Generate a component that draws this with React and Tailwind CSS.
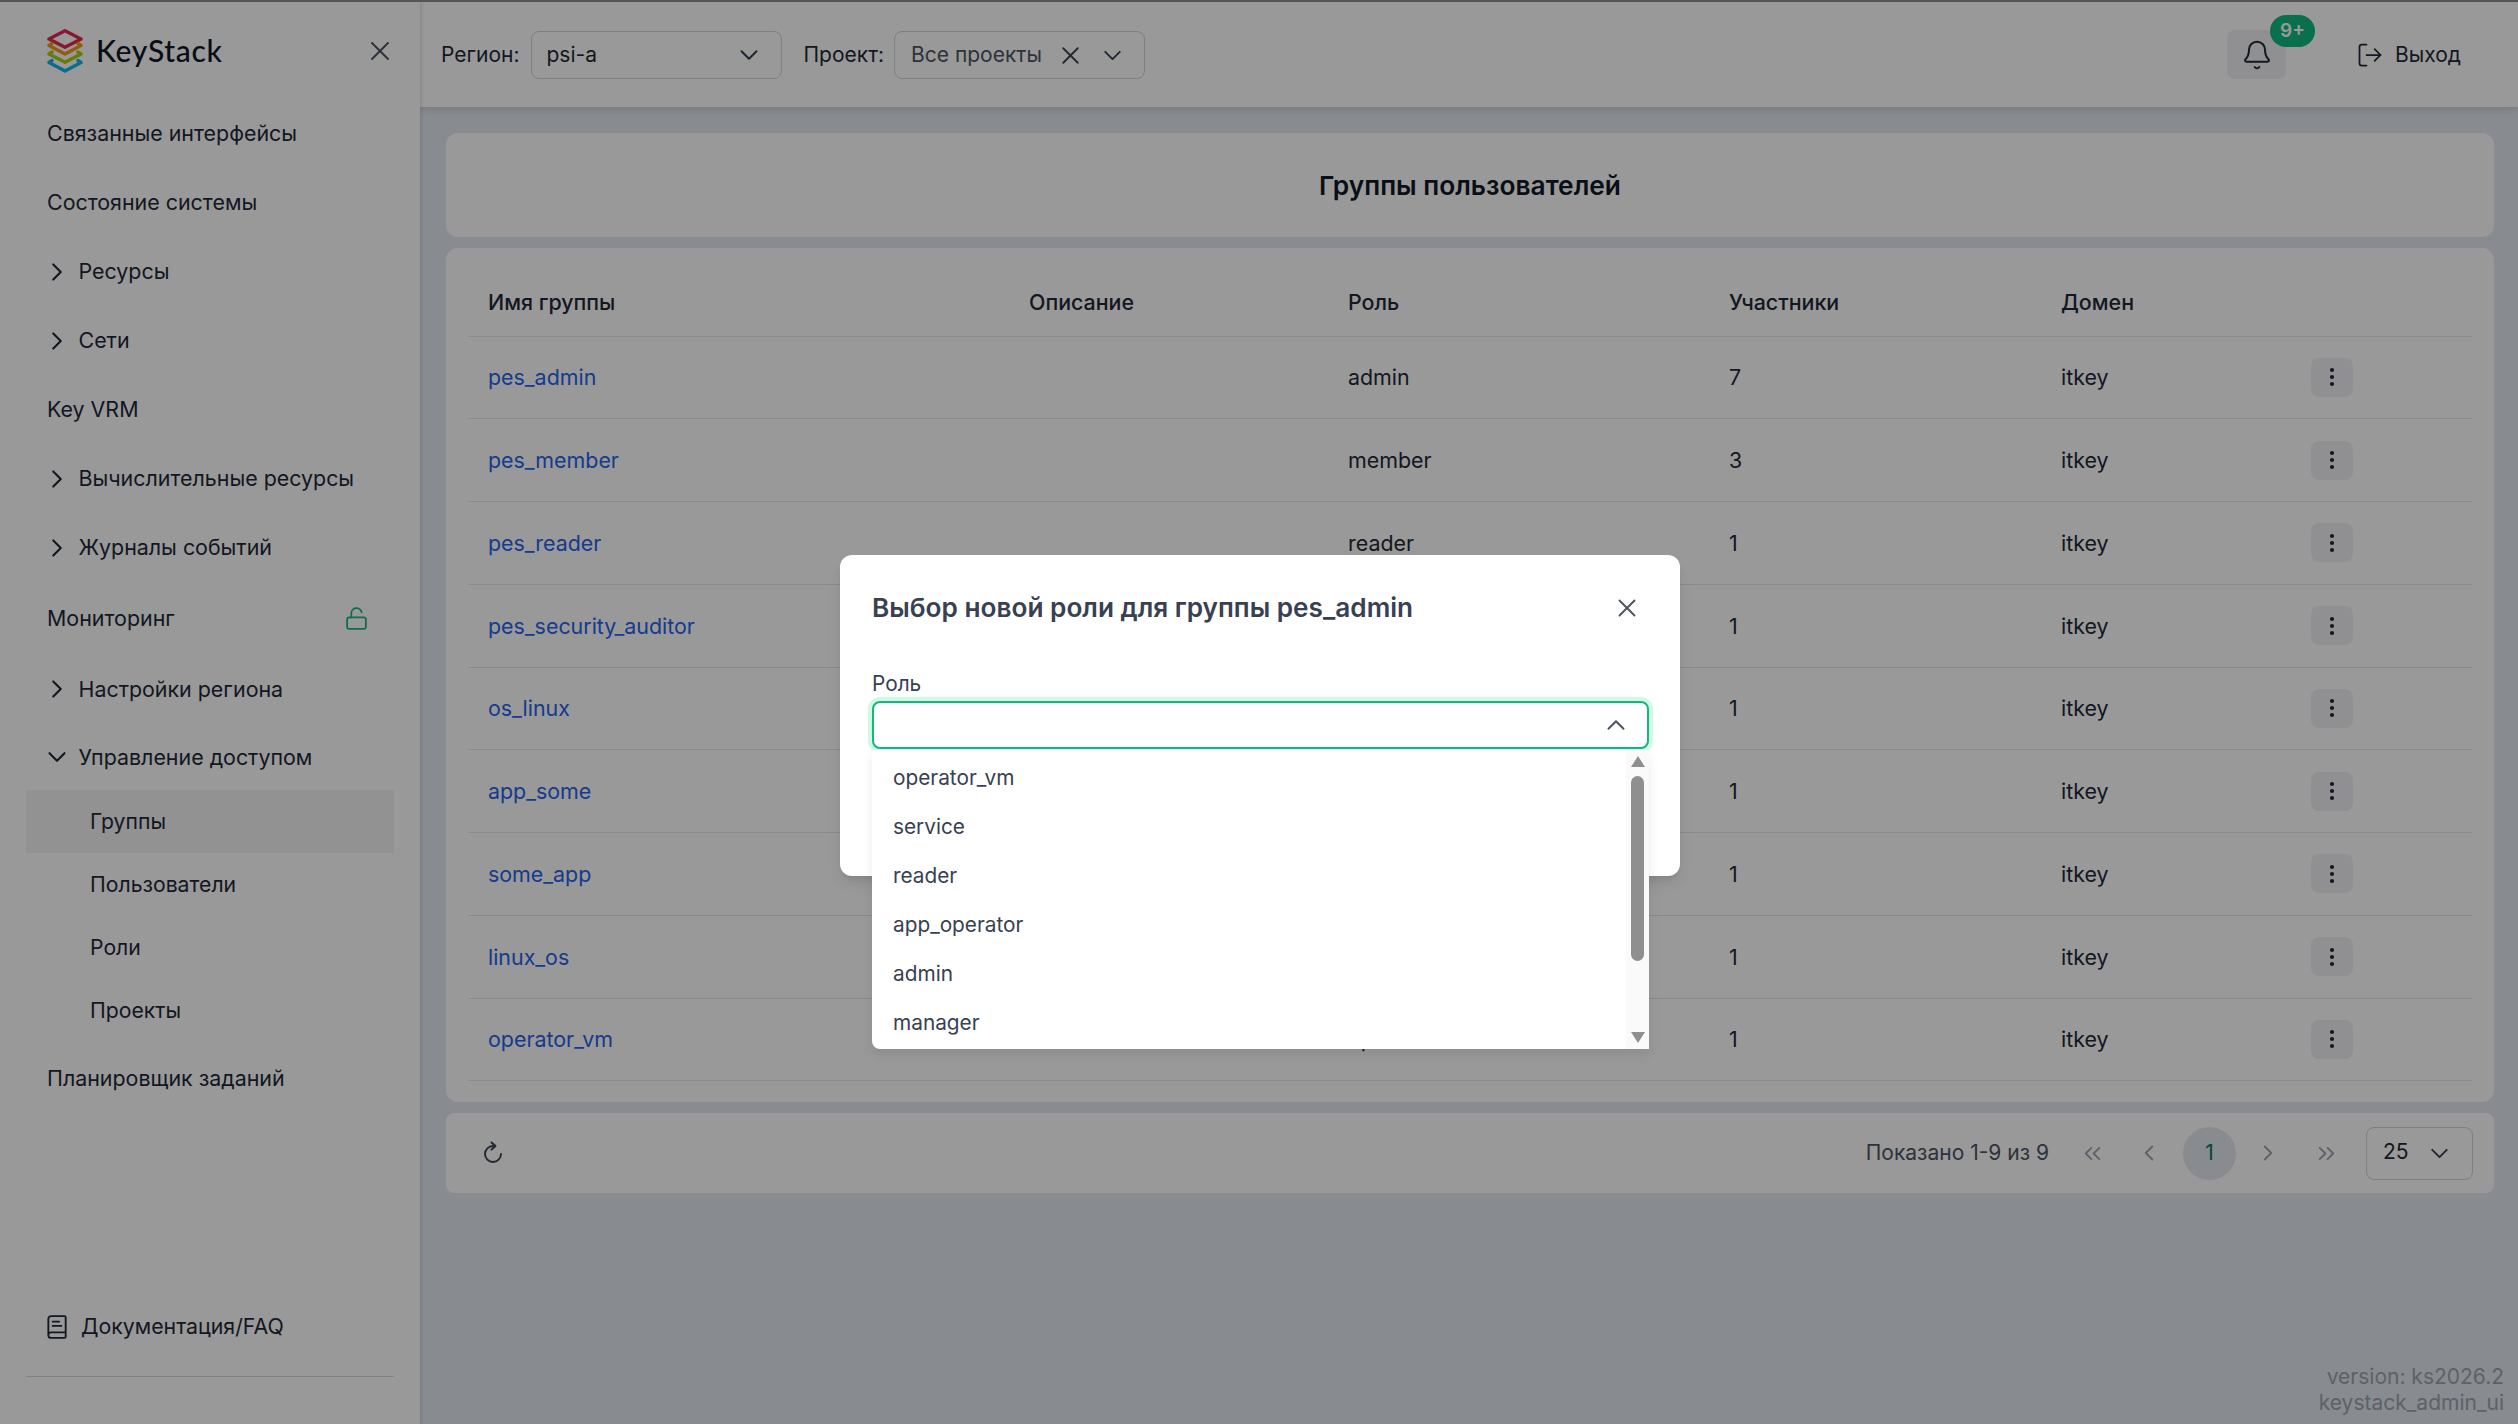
import React from "react";
import { ChevronRight, ChevronDown, ChevronUp, X, Bell, LogOut, LockOpen, BookText, EllipsisVertical, ChevronsLeft, ChevronsRight, ChevronLeft } from "lucide-react";

function Logo() {
  return (
    <svg width="36" height="44" viewBox="0 0 36 44" fill="none" strokeWidth="3.4" strokeLinejoin="round" strokeLinecap="round">
      <path d="M18 1.8 L34 10 L18 18.2 L2 10 Z" stroke="#e5284f" />
      <path d="M5 14.5 L2 16.5 L18 25 L34 16.5 L31 14.5" stroke="#f09a17" />
      <path d="M5 23 L2 25 L18 33.2 L34 25 L31 23" stroke="#a8cf12" />
      <path d="M5 31.5 L2 33.5 L18 42 L34 33.5 L31 31.5" stroke="#16b5e6" />
    </svg>
  );
}

function NavTop({ children, right, className = "h-[69px]" }) {
  return (
    <div className={"flex items-center justify-between pl-[47px] pr-[51px] text-[21.4px] text-[#1f2937] " + className}>
      <span>{children}</span>
      {right}
    </div>
  );
}

function NavGroup({ children, open, className = "h-[69px]" }) {
  return (
    <div className={"flex items-center pl-[42px] text-[21.4px] text-[#1f2937] " + className}>
      {open ? <ChevronDown size={30} strokeWidth={1.7} className="mr-[6.5px]" /> : <ChevronRight size={30} strokeWidth={1.7} className="mr-[6.5px]" />}
      <span>{children}</span>
    </div>
  );
}

function NavSub({ children, active }) {
  return (
    <div className={"h-[63px] ml-[26px] mr-[26px] flex items-center pl-[64px] text-[21.2px] text-[#1f2937] " + (active ? "bg-[#f3f4f6]" : "")}>
      {children}
    </div>
  );
}

const rows = [
  ["pes_admin", "admin", "7"],
  ["pes_member", "member", "3"],
  ["pes_reader", "reader", "1"],
  ["pes_security_auditor", "", "1"],
  ["os_linux", "", "1"],
  ["app_some", "", "1"],
  ["some_app", "", "1"],
  ["linux_os", "", "1"],
  ["operator_vm", "operator", "1"],
];

const gridCols = "grid grid-cols-[541px_319px_381px_332px_250px_1fr]";

function Sel({ className, children }) {
  return (
    <div className={"h-[48px] rounded-lg border border-[#d1d5db] flex items-center " + className}>{children}</div>
  );
}

export default function App() {
  return (
    <div className="relative w-[2518px] h-[1424px] overflow-hidden flex bg-[#e3e8f0] text-[#1f2937]" style={{ fontFamily: "Inter, 'Noto Sans', sans-serif" }}>
      <aside className="w-[420px] shrink-0 bg-white flex flex-col shadow-[1px_0_4px_rgba(0,0,0,0.15)] z-10">
        <div className="h-[99px] shrink-0 flex items-center pl-[47px] pr-[24px] pt-[2px]">
          <Logo />
          <span className="ml-[13px] text-[30px] font-medium tracking-[0.7px] text-[#101626]" style={{ fontFamily: "Lato, sans-serif" }}>KeyStack</span>
          <X size={32} strokeWidth={1.5} className="ml-auto text-[#4b5563]" />
        </div>
        <NavTop>Связанные интерфейсы</NavTop>
        <NavTop>Состояние системы</NavTop>
        <NavGroup>Ресурсы</NavGroup>
        <NavGroup>Сети</NavGroup>
        <NavTop>Key VRM</NavTop>
        <NavGroup>Вычислительные ресурсы</NavGroup>
        <NavGroup>Журналы событий</NavGroup>
        <NavTop className="h-[72px]" right={<LockOpen size={25} strokeWidth={1.7} className="text-[#10b981]" />}>Мониторинг</NavTop>
        <NavGroup className="h-[70px]">Настройки региона</NavGroup>
        <NavGroup open className="h-[66px]">Управление доступом</NavGroup>
        <NavSub active>Группы</NavSub>
        <NavSub>Пользователи</NavSub>
        <NavSub>Роли</NavSub>
        <NavSub>Проекты</NavSub>
        <NavTop className="h-[69px] mt-[2px]">Планировщик заданий</NavTop>
        <div className="mt-auto mx-[26px] h-[100px] border-b border-[#d8dadd] flex items-center pl-[18px] text-[21.3px] shrink-0">
          <BookText size={26} strokeWidth={1.7} className="mr-[11px]" />
          Документация/FAQ
        </div>
        <div className="h-[47px] shrink-0" />
      </aside>

      <main className="flex-1 min-w-0 flex flex-col">
        <header className="h-[107px] shrink-0 bg-white shadow-[0_3px_8px_rgba(0,0,0,0.12)] flex items-center pl-[21px] pr-[57px] text-[21px] pt-[3px]">
          <span className="mr-[11px]">Регион:</span>
          <Sel className="w-[251px] pl-[15px] pr-[17px] justify-between">
            <span className="text-[#1f2937]">psi-a</span>
            <ChevronDown size={30} strokeWidth={1.6} className="text-[#374151]" />
          </Sel>
          <span className="ml-[22px] mr-[10px]">Проект:</span>
          <Sel className="w-[251px] pl-[16px] pr-[17px]">
            <span className="text-[#4b5563]">Все проекты</span>
            <X size={29} strokeWidth={1.5} className="ml-auto text-[#374151] mr-[13px]" />
            <ChevronDown size={29} strokeWidth={1.6} className="text-[#374151]" />
          </Sel>
          <div className="ml-auto relative w-[59px] h-[49px] mt-[-1px] rounded-lg bg-[#f0f1f3] flex items-center justify-center mr-[70px]">
            <Bell size={32} strokeWidth={1.5} />
            <span className="absolute left-[43px] top-[-15px] w-[45px] h-[32px] rounded-full bg-[#10b981] text-white text-[19px] font-semibold flex items-center justify-center">9+</span>
          </div>
          <LogOut size={28} strokeWidth={1.5} className="mr-[11px]" />
          <span>Выход</span>
        </header>

        <div className="flex-1 px-[26px] pr-[24px] pt-[26px] flex flex-col gap-[10px] relative">
          <div className="h-[104px] rounded-xl bg-white flex items-center justify-center pt-[1px] text-[26.3px] font-semibold text-[#111827] mb-[1px]">Группы пользователей</div>
          <div className="h-[854px] rounded-xl bg-white px-[22px]">
            <div className={gridCols + " h-[88.5px] items-center pl-[20px] pt-[21px] border-b border-[#e5e7eb] font-medium text-[21.4px] text-[#1f2937]"}>
              <span>Имя группы</span><span>Описание</span><span>Роль</span><span>Участники</span><span>Домен</span><span />
            </div>
            {rows.map((r) => (
              <div key={r[0]} className={gridCols + " h-[82.75px] items-center pl-[20px] border-b border-[#e5e7eb] text-[21.4px]"}>
                <span className="text-[#2563eb]">{r[0]}</span>
                <span />
                <span>{r[1]}</span>
                <span>{r[2]}</span>
                <span>itkey</span>
                <span className="ml-[0px] w-[42px] h-[39px] rounded-lg bg-[#f0f1f3] flex items-center justify-center"><EllipsisVertical size={24} strokeWidth={2.2} /></span>
              </div>
            ))}
          </div>
          <div className="h-[80px] mt-[1px] rounded-lg bg-white flex items-center pl-[35px] pr-[21px] text-[21px]">
            <svg width="24" height="24" viewBox="0 0 24 24" fill="none" stroke="#374151" strokeWidth="1.9" strokeLinecap="round" strokeLinejoin="round">
              <path d="M12 5 A8 8 0 1 0 20 13" />
              <path d="M10.5 1.5 L14.5 5 L10.5 8.5" />
            </svg>
            <span className="ml-auto text-[#4b5563] mr-[29px]">Показано 1-9 из 9</span>
            <div className="flex items-center text-[#9ca3af]">
              <span className="w-[28px] flex justify-center"><ChevronsLeft size={27} strokeWidth={1.6} /></span>
              <span className="w-[28px] ml-[29px] flex justify-center"><ChevronLeft size={26} strokeWidth={1.7} /></span>
              <span className="w-[53px] h-[53px] ml-[20px] rounded-full bg-[#e3e8f0] text-[#047857] flex items-center justify-center">1</span>
              <span className="w-[28px] ml-[18px] flex justify-center"><ChevronRight size={26} strokeWidth={1.7} /></span>
              <span className="w-[28px] ml-[30px] flex justify-center"><ChevronsRight size={27} strokeWidth={1.6} /></span>
            </div>
            <div className="ml-[26px] w-[107px] h-[53px] rounded-lg border border-[#d1d5db] flex items-center pl-[16px] pr-[18px] justify-between pb-[3px]">
              <span>25</span>
              <ChevronDown size={29} strokeWidth={1.6} className="mt-[3px] text-[#374151]" />
            </div>
          </div>
          <div className="absolute right-[14px] bottom-[8px] text-[21px] leading-[26px] text-right text-[#9ca3af]">
            <div>version: ks2026.2</div>
            <div>keystack_admin_ui</div>
          </div>
        </div>
      </main>

      <div className="absolute inset-x-0 top-0 h-[2px] bg-[#555] z-30" />
      <div className="absolute inset-0 bg-black/40 z-20" />

      <div className="absolute z-30 left-[840px] top-[555px] w-[840px] h-[321px] rounded-xl bg-white shadow-lg">
        <div className="absolute left-[32px] top-[33px] text-[26.2px] leading-[40px] font-semibold text-[#374151]">Выбор новой роли для группы pes_admin</div>
        <X size={30} strokeWidth={1.5} className="absolute right-[38px] top-[38px] text-[#4b5563]" />
        <div className="absolute left-[32px] top-[116px] text-[20.8px] leading-[26px] text-[#374151]">Роль</div>
        <div className="absolute left-[32px] top-[146px] w-[777px] h-[48px] rounded-lg border-2 border-[#10b981] ring-4 ring-[#d1fae5] bg-white flex items-center justify-end pr-[16px]">
          <ChevronUp size={30} strokeWidth={1.6} className="text-[#4b5563]" />
        </div>
      </div>
      <div className="absolute z-40 left-[872px] top-[750px] w-[777px] h-[299px] rounded-bl-lg bg-white shadow-[0_6px_12px_rgba(0,0,0,0.08)] flex">
        <div className="flex-1 pt-[3px]">
          {["operator_vm", "service", "reader", "app_operator", "admin", "manager"].map((o) => (
            <div key={o} className="h-[49px] flex items-center pl-[21px] text-[20.8px] text-[#374151]">{o}</div>
          ))}
        </div>
        <div className="w-[23px] bg-[#fafafa] flex flex-col items-center relative">
          <svg className="absolute top-[6px]" width="14" height="11" viewBox="0 0 14 11"><path d="M7 0 L14 11 L0 11 Z" fill="#8f8f8f" /></svg>
          <div className="absolute top-[26px] w-[13px] h-[185px] rounded-full bg-[#8f8f8f]" />
          <svg className="absolute bottom-[6px]" width="14" height="11" viewBox="0 0 14 11"><path d="M7 11 L14 0 L0 0 Z" fill="#8f8f8f" /></svg>
        </div>
      </div>
    </div>
  );
}
